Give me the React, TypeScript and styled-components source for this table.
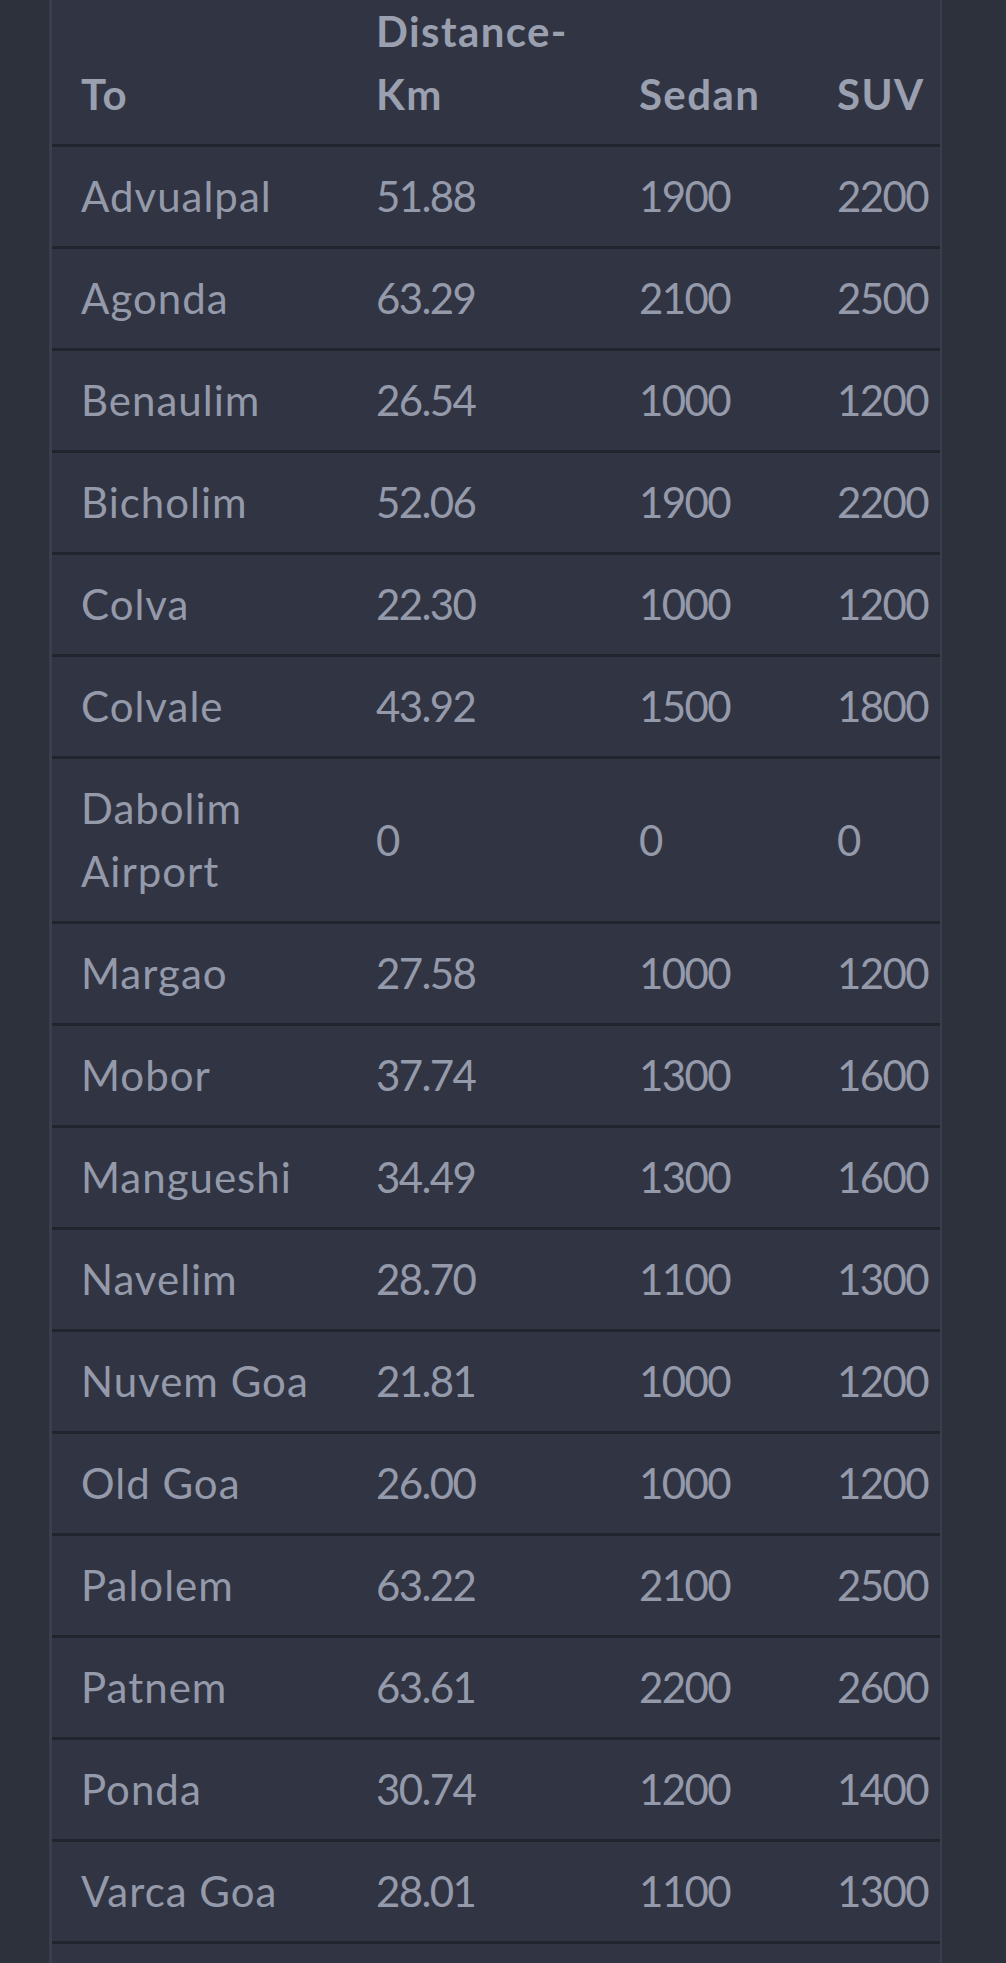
import React from "react";
import styled, { createGlobalStyle } from "styled-components";

const Global = createGlobalStyle`
  html, body {
    margin: 0;
    padding: 0;
    background: #2d313c;
  }
  body {
    font-family: Lato, "Open Sans", sans-serif;
  }
`;

const Page = styled.div`
  height: 1963px;
  overflow: hidden;
  padding: 0 64px 0 49px;
  box-sizing: border-box;
  background: #2d313c;
`;

const Panel = styled.div`
  height: 100%;
  background: #313543;
  border-left: 3px solid #3a3f4e;
  border-right: 2px solid #3a3f4e;
  overflow: hidden;
`;

const Table = styled.table`
  border-collapse: collapse;
  table-layout: fixed;
  width: 916px;
  font-size: 42px;
  line-height: 63px;
`;

const HeadCell = styled.th`
  text-align: left;
  vertical-align: bottom;
  font-weight: 700;
  color: #9ba0b0;
  letter-spacing: 1.4px;
  padding: 0 29px 18px;
  border-bottom: 3px solid #22252d;
`;

const Row = styled.tr`
  border-bottom: 3px solid #22252d;
`;

const Cell = styled.td<{ $num?: boolean }>`
  text-align: left;
  vertical-align: middle;
  color: #959aab;
  font-weight: 400;
  padding: 18px 29px;
  letter-spacing: ${(p) => (p.$num ? "-1.6px" : "1px")};
  white-space: ${(p) => (p.$num ? "nowrap" : "normal")};
`;

const rows: [string, string, string, string][] = [
  ["Advualpal", "51.88", "1900", "2200"],
  ["Agonda", "63.29", "2100", "2500"],
  ["Benaulim", "26.54", "1000", "1200"],
  ["Bicholim", "52.06", "1900", "2200"],
  ["Colva", "22.30", "1000", "1200"],
  ["Colvale", "43.92", "1500", "1800"],
  ["Dabolim Airport", "0", "0", "0"],
  ["Margao", "27.58", "1000", "1200"],
  ["Mobor", "37.74", "1300", "1600"],
  ["Mangueshi", "34.49", "1300", "1600"],
  ["Navelim", "28.70", "1100", "1300"],
  ["Nuvem Goa", "21.81", "1000", "1200"],
  ["Old Goa", "26.00", "1000", "1200"],
  ["Palolem", "63.22", "2100", "2500"],
  ["Patnem", "63.61", "2200", "2600"],
  ["Ponda", "30.74", "1200", "1400"],
  ["Varca Goa", "28.01", "1100", "1300"],
];

export default function App() {
  return (
    <>
      <Global />
      <Page>
        <Panel>
          <Table>
            <colgroup>
              <col style={{ width: 295 }} />
              <col style={{ width: 263 }} />
              <col style={{ width: 198 }} />
              <col style={{ width: 160 }} />
            </colgroup>
            <thead>
              <tr>
                <HeadCell>To</HeadCell>
                <HeadCell>
                  Distance-
                  <br />
                  Km
                </HeadCell>
                <HeadCell>Sedan</HeadCell>
                <HeadCell>SUV</HeadCell>
              </tr>
            </thead>
            <tbody>
              {rows.map((r) => (
                <Row key={r[0]}>
                  <Cell>{r[0]}</Cell>
                  <Cell $num>{r[1]}</Cell>
                  <Cell $num>{r[2]}</Cell>
                  <Cell $num>{r[3]}</Cell>
                </Row>
              ))}
            </tbody>
          </Table>
        </Panel>
      </Page>
    </>
  );
}
